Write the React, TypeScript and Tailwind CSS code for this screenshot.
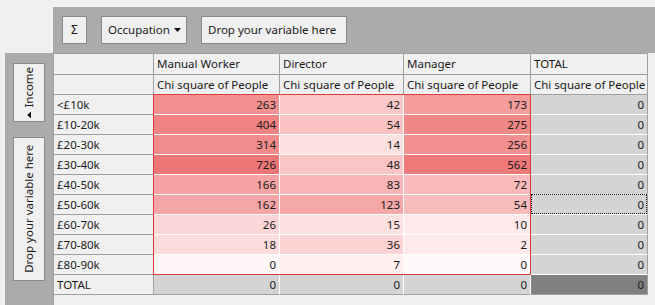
import React from 'react';

const rowLabels = ['<£10k', '£10-20k', '£20-30k', '£30-40k', '£40-50k', '£50-60k', '£60-70k', '£70-80k', '£80-90k'];

const columns = [
  {
    name: 'Manual Worker',
    width: 'w-[126px]',
    cells: [
      { v: 263, bg: 'bg-[#f39191]' },
      { v: 404, bg: 'bg-[#f08383]' },
      { v: 314, bg: 'bg-[#f28b8b]' },
      { v: 726, bg: 'bg-[#ee7676]' },
      { v: 166, bg: 'bg-[#f5a3a3]' },
      { v: 162, bg: 'bg-[#f6a6a6]' },
      { v: 26, bg: 'bg-[#fcd6d6]' },
      { v: 18, bg: 'bg-[#fddcdc]' },
      { v: 0, bg: 'bg-[#fff7f7]' },
    ],
  },
  {
    name: 'Director',
    width: 'w-[124px]',
    cells: [
      { v: 42, bg: 'bg-[#fbc9c9]' },
      { v: 54, bg: 'bg-[#fac2c2]' },
      { v: 14, bg: 'bg-[#fde1e1]' },
      { v: 48, bg: 'bg-[#fbc5c5]' },
      { v: 83, bg: 'bg-[#f8b6b6]' },
      { v: 123, bg: 'bg-[#f5a8a8]' },
      { v: 15, bg: 'bg-[#fde0e0]' },
      { v: 36, bg: 'bg-[#fcd2d2]' },
      { v: 7, bg: 'bg-[#feeeee]' },
    ],
  },
  {
    name: 'Manager',
    width: 'w-[127px]',
    cells: [
      { v: 173, bg: 'bg-[#f49c9c]' },
      { v: 275, bg: 'bg-[#f18888]' },
      { v: 256, bg: 'bg-[#f29090]' },
      { v: 562, bg: 'bg-[#ef7878]' },
      { v: 72, bg: 'bg-[#f8baba]' },
      { v: 54, bg: 'bg-[#f8bcbc]' },
      { v: 10, bg: 'bg-[#feeaea]' },
      { v: 2, bg: 'bg-[#feeaea]' },
      { v: 0, bg: 'bg-[#fff8f8]' },
    ],
  },
];

const headCell = 'flex items-center pl-[3px] bg-[#f0f0f0] border-b border-r border-[#a0a0a0] whitespace-nowrap overflow-hidden';

export default function App() {
  return (
    <div className="w-[655px] h-[305px] overflow-hidden bg-[#f0f0f0] text-[11.5px] text-[#1a1a1a] font-['Noto_Sans',sans-serif] leading-none">
      {/* Column drop zone */}
      <div className="flex pt-[7px]">
        <div className="w-[53px] shrink-0" />
        <div className="flex-1 h-[46px] bg-[#ababab] flex items-center gap-[14px] pl-[9px]">
          <button className="w-[25px] h-[28px] bg-[#efefef] border border-[#8a8a8a] flex items-center justify-center text-[12px]">Σ</button>
          <button className="w-[86px] h-[28px] bg-[#efefef] border border-[#8a8a8a] flex items-center justify-between pl-[6px] pr-[5px]">
            <span>Occupation</span>
            <svg width="7" height="4" viewBox="0 0 7 4" className="shrink-0">
              <polygon points="0,0 7,0 3.5,4" fill="#111" />
            </svg>
          </button>
          <button className="w-[146px] h-[28px] bg-[#efefef] border border-[#8a8a8a] flex items-center pl-[6px]">Drop your variable here</button>
        </div>
      </div>

      <div className="flex">
        {/* Row drop zone */}
        <div className="ml-[5px] w-[48px] h-[252px] shrink-0 bg-[#ababab] flex flex-col pl-[8px] pt-[10px] gap-[15px]">
          <button className="w-[32px] h-[59px] bg-[#efefef] border border-[#8a8a8a] flex items-center justify-center">
            <span className="-rotate-90 flex items-center gap-[4px] whitespace-nowrap">
              <svg width="7" height="4" viewBox="0 0 7 4">
                <polygon points="0,4 3.5,0 7,4" fill="#111" />
              </svg>
              Income
            </span>
          </button>
          <button className="w-[32px] h-[144px] bg-[#efefef] border border-[#8a8a8a] flex items-center justify-center">
            <span className="-rotate-90 whitespace-nowrap">Drop your variable here</span>
          </button>
        </div>

        {/* Pivot grid */}
        <div className="flex flex-col border-l border-t border-[#a0a0a0]">
          <div className="flex h-[21px]">
            <div className={`${headCell} w-[100px]`} />
            {columns.map((c) => (
              <div key={c.name} className={`${headCell} ${c.width}`}>{c.name}</div>
            ))}
            <div className={`${headCell} w-[117px]`}>TOTAL</div>
          </div>
          <div className="flex h-[20px]">
            <div className={`${headCell} w-[100px]`} />
            {columns.map((c) => (
              <div key={c.name} className={`${headCell} ${c.width}`}>Chi square of People</div>
            ))}
            <div className={`${headCell} w-[117px]`}>Chi square of People</div>
          </div>

          <div className="flex">
            <div className="flex flex-col w-[100px]">
              {rowLabels.map((l) => (
                <div key={l} className={`${headCell} h-[20px]`}>{l}</div>
              ))}
            </div>
            <div className="relative flex after:absolute after:-top-px after:-left-px after:right-0 after:bottom-0 after:border after:border-[#dc3c3c] after:pointer-events-none">
              {columns.map((c) => (
                <div key={c.name} className={`flex flex-col ${c.width}`}>
                  {c.cells.map((cell, i) => (
                    <div key={i} className={`h-[20px] flex items-center justify-end pr-[3px] border-b border-r border-white ${cell.bg}`}>
                      {cell.v}
                    </div>
                  ))}
                </div>
              ))}
            </div>
            <div className="flex flex-col w-[117px]">
              {rowLabels.map((l, i) => (
                <div
                  key={l}
                  className={`relative h-[20px] flex items-center justify-end pr-[3px] bg-[#d4d4d4] border-b border-b-white border-r border-r-[#a0a0a0] ${
                    i === 5 ? 'after:absolute after:-top-px after:left-0 after:right-0 after:bottom-0 after:border after:border-dotted after:border-[#111]' : ''
                  }`}
                >
                  0
                </div>
              ))}
            </div>
          </div>

          <div className="flex h-[20px]">
            <div className={`${headCell} w-[100px]`}>TOTAL</div>
            {columns.map((c) => (
              <div key={c.name} className={`${c.width} flex items-center justify-end pr-[3px] bg-[#d4d4d4] border-b border-b-[#a0a0a0] border-r border-r-white`}>0</div>
            ))}
            <div className="w-[117px] flex items-center justify-end pr-[3px] bg-[#808080] border-b border-r border-[#a0a0a0]">0</div>
          </div>
        </div>
      </div>
    </div>
  );
}
